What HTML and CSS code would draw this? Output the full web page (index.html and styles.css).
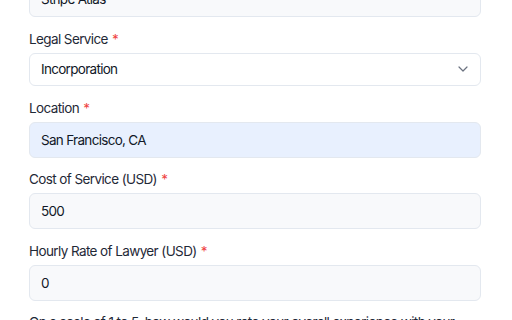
FILE: index.html
```html
<!DOCTYPE html>
<html lang="en">
<head>
<meta charset="utf-8">
<link rel="stylesheet" href="styles.css">
</head>
<body>
<form class="form">
  <div class="field">
    <div class="input">Stripe Atlas</div>
  </div>
  <div class="field">
    <label class="label">Legal Service <span class="req">*</span></label>
    <div class="input select">
      <span>Incorporation</span>
      <svg class="chev" width="10" height="6" viewBox="0 0 10 6"><path d="M1 1l4 4 4-4" fill="none" stroke="#6b7280" stroke-width="1.2" stroke-linecap="round" stroke-linejoin="round"/></svg>
    </div>
  </div>
  <div class="field">
    <label class="label">Location <span class="req">*</span></label>
    <div class="input autofill">San Francisco, CA</div>
  </div>
  <div class="field">
    <label class="label">Cost of Service (USD) <span class="req">*</span></label>
    <div class="input">500</div>
  </div>
  <div class="field">
    <label class="label">Hourly Rate of Lawyer (USD) <span class="req">*</span></label>
    <div class="input">0</div>
  </div>
  <div class="field">
    <label class="label">On a scale of 1 to 5, how would you rate your overall experience with your legal service provider? <span class="req">*</span></label>
  </div>
</form>
</body>
</html>
```
FILE: styles.css
```css
html, body {
  margin: 0;
  padding: 0;
  background: #ffffff;
  overflow: hidden;
}
body {
  font-family: Inter, "Noto Sans", sans-serif;
  color: #111827;
}
.form {
  width: 452px;
  margin: -19px 0 0 29px;
  display: flex;
  flex-direction: column;
  gap: 11.5px;
}
.field {
  display: flex;
  flex-direction: column;
  gap: 4px;
}
.label {
  font-size: 13.5px;
  line-height: 20px;
  font-weight: 400;
  letter-spacing: -0.6px;
  color: #1f2937;
}
.req {
  color: #ef4444;
  margin-left: 1px;
}
.input {
  box-sizing: border-box;
  height: 36px;
  padding: 0 11px;
  display: flex;
  align-items: center;
  font-size: 13.5px;
  letter-spacing: -0.7px;
  color: #111827;
  background: #f8f9fb;
  border: 1px solid #e3e8ef;
  border-radius: 6px;
}
.select {
  height: 33.5px;
  background: #ffffff;
  justify-content: space-between;
  padding-right: 12px;
}
.autofill {
  background: #e8f0fe;
}
.chev {
  display: block;
}
```
